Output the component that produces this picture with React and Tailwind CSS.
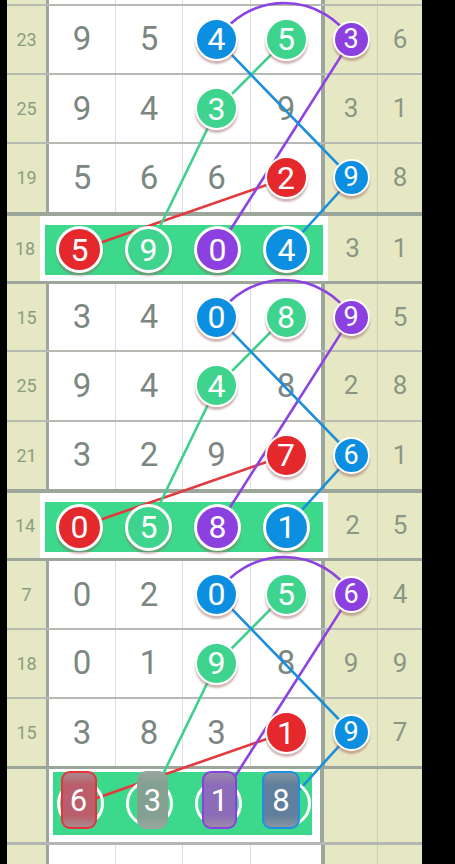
import React from "react";

const BALL_BG = {
  blue: "bg-[#0d8fe1]",
  green: "bg-[#3fd48e]",
  purple: "bg-[#8c40df]",
  red: "bg-[#e5282c]",
};

function Ball({ n, color, size }) {
  const sizeCls =
    size === "sm"
      ? "w-[37px] h-[37px] border-2 text-[27px]"
      : size === "xl"
      ? "w-[47px] h-[47px] border-[3px] text-[32px]"
      : "w-[43px] h-[43px] border-[2.5px] text-[32px]";
  return (
    <div
      className={`relative z-20 flex items-center justify-center rounded-full border-white text-white leading-none shadow-[0_3px_2px_rgba(150,90,90,0.45)] ${sizeCls} ${BALL_BG[color]}`}
    >
      {n}
    </div>
  );
}

function Row({ label, c1, c2, c3, c4, c5, c6, top, h }) {
  const topCls =
    top === "thick"
      ? "border-t-[3px] border-[#9ca69a]"
      : top === "none"
      ? ""
      : top === "bottom"
      ? "border-t-[3px] border-[#b3b6b2]"
      : "border-t-2 border-[#b5bab3]";
  const hCls = h === "top" ? "h-[7px]" : h === "bottom" ? "h-[40px]" : "h-[69.33px]";
  return (
    <div className={`flex ${hCls} ${topCls}`}>
      <div className="w-[42px] bg-[#e5e8c2] border-r-[3px] border-r-[#9ca69a] flex items-center justify-center text-[18px] text-[#8a9d83]">
        {label}
      </div>
      <div className="w-[67px] bg-white border-r border-r-[#dcdfdc] flex items-center justify-center text-[33px] text-[#7c8781]">
        {c1}
      </div>
      <div className="w-[67px] bg-white border-r border-r-[#dcdfdc] flex items-center justify-center text-[33px] text-[#7c8781]">
        {c2}
      </div>
      <div className="w-[68px] bg-white border-r border-r-[#dcdfdc] flex items-center justify-center text-[33px] text-[#7c8781]">
        {c3}
      </div>
      <div className="w-[70px] bg-white flex items-center justify-center text-[33px] text-[#7c8781]">
        {c4}
      </div>
      <div className="w-[57px] bg-[#e5e8c2] border-l-[4px] border-l-[#9ca69a] border-r border-r-[#cdd1b0] flex items-center justify-center text-[26px] text-[#8a9686]">
        {c5}
      </div>
      <div className="w-[44px] bg-[#e5e8c2] flex items-center justify-center text-[26px] text-[#8a9686]">
        {c6}
      </div>
    </div>
  );
}

function GreenRow({ label, balls, c5, c6 }) {
  const colors = ["red", "green", "purple", "blue"];
  return (
    <div className="flex h-[69.33px] border-t-4 border-[#9ca69a]">
      <div className="w-[33px] bg-[#e5e8c2] flex items-center justify-center pl-[3px] text-[18px] text-[#8a9d83]">
        {label}
      </div>
      <div className="w-[288px] bg-white pl-[5px] pr-[5px] pt-[9px] pb-[6px] flex">
        <div className="flex-1 bg-[#3cd98c] flex items-center pl-[11px] gap-[22px]">
          {balls.map((b, i) => (
            <Ball key={i} n={b} color={colors[i]} size="xl" />
          ))}
        </div>
      </div>
      <div className="w-[50px] bg-[#e5e8c2] border-r border-r-[#cdd1b0] flex items-center justify-center text-[26px] text-[#8a9686]">
        {c5}
      </div>
      <div className="w-[44px] bg-[#e5e8c2] flex items-center justify-center text-[26px] text-[#8a9686]">
        {c6}
      </div>
    </div>
  );
}

function GhostSlot({ n, rectCls }) {
  return (
    <div className="relative z-20 w-[47px] h-[47px] rounded-full border-[3px] border-white">
      <div
        className={`absolute -top-[12px] h-[58px] rounded-[9px] flex items-center justify-center text-[31px] text-white leading-none ${rectCls}`}
      >
        {n}
      </div>
    </div>
  );
}

function GhostGreenRow() {
  return (
    <div className="flex h-[76px] border-t-[3px] border-[#9ca69a]">
      <div className="w-[42px] bg-[#e5e8c2] border-r-[3px] border-r-[#9ca69a]" />
      <div className="w-[271px] bg-white pl-[4px] pr-[8px] pt-[3px] pb-[7px] flex">
        <div className="flex-1 bg-[#3cd98c] flex items-center pl-[3.5px] gap-[22px]">
          <GhostSlot
            n="6"
            rectCls="left-[1px] w-[36px] border-2 border-[#e5333b] bg-[linear-gradient(180deg,#a9898f_0%,#bb5d6a_22%,#bb5d6a_78%,#a9898f_100%)]"
          />
          <GhostSlot
            n="3"
            rectCls="left-[8.5px] w-[31px] bg-[linear-gradient(180deg,#9aa69e_0%,#84a091_22%,#84a091_78%,#9aa69e_100%)]"
          />
          <GhostSlot
            n="1"
            rectCls="left-[4.5px] w-[35px] border-2 border-[#8a3fe0] bg-[linear-gradient(180deg,#9a8aa8_0%,#8c6cb8_22%,#8c6cb8_78%,#9a8aa8_100%)]"
          />
          <GhostSlot
            n="8"
            rectCls="-left-[4.5px] w-[38px] border-2 border-[#1e90e4] bg-[linear-gradient(180deg,#8a94a0_0%,#5f7f9c_22%,#5f7f9c_78%,#8a94a0_100%)]"
          />
        </div>
      </div>
      <div className="w-[58px] bg-[#e5e8c2] border-l-[4px] border-l-[#9ca69a] border-r border-r-[#cdd1b0]" />
      <div className="w-[44px] bg-[#e5e8c2]" />
    </div>
  );
}

function Lines() {
  const y0 = 35.67;
  const y1 = 105;
  const y2 = 174.33;
  const yg = 246;
  const c3 = 210;
  const c4 = 279;
  const c5 = 344.5;
  const g = [72.5, 141.5, 210.5, 279.5];
  return (
    <svg
      className="absolute left-0 top-0 z-10 overflow-visible pointer-events-none"
      width="415"
      height="277"
      fill="none"
      strokeWidth="2.6"
      strokeLinecap="round"
    >
      <line x1={g[0]} y1={yg} x2={c4} y2={y2} stroke="#e23b3f" />
      <polyline points={`${g[1]},${yg} ${c3},${y1} ${c4},${y0}`} stroke="#3fd08f" />
      <line x1={g[2]} y1={yg} x2={c5} y2={y0} stroke="#8d43e2" />
      <path d={`M${c3} ${y0} A 80 80 0 0 1 ${c5} ${y0}`} stroke="#8d43e2" />
      <polyline points={`${c3},${y0} ${c5},${y2} ${g[3]},${yg}`} stroke="#1c8fdc" />
    </svg>
  );
}

function Group({ data, first, ghost }) {
  return (
    <div className="relative">
      <Lines />
      <Row
        top={first ? "thin" : "thick"}
        label={data.l[0]}
        c1={data.r0[0]}
        c2={data.r0[1]}
        c3={<Ball n={data.r0[2]} color="blue" />}
        c4={<Ball n={data.r0[3]} color="green" />}
        c5={<Ball n={data.r0[4]} color="purple" size="sm" />}
        c6={data.r0[5]}
      />
      <Row
        label={data.l[1]}
        c1={data.r1[0]}
        c2={data.r1[1]}
        c3={<Ball n={data.r1[2]} color="green" />}
        c4={data.r1[3]}
        c5={data.r1[4]}
        c6={data.r1[5]}
      />
      <Row
        label={data.l[2]}
        c1={data.r2[0]}
        c2={data.r2[1]}
        c3={data.r2[2]}
        c4={<Ball n={data.r2[3]} color="red" />}
        c5={<Ball n={data.r2[4]} color="blue" size="sm" />}
        c6={data.r2[5]}
      />
      {ghost ? (
        <GhostGreenRow />
      ) : (
        <GreenRow label={data.l[3]} balls={data.g} c5={data.g5} c6={data.g6} />
      )}
    </div>
  );
}

const GROUPS = [
  {
    l: ["23", "25", "19", "18"],
    r0: ["9", "5", "4", "5", "3", "6"],
    r1: ["9", "4", "3", "9", "3", "1"],
    r2: ["5", "6", "6", "2", "9", "8"],
    g: ["5", "9", "0", "4"],
    g5: "3",
    g6: "1",
  },
  {
    l: ["15", "25", "21", "14"],
    r0: ["3", "4", "0", "8", "9", "5"],
    r1: ["9", "4", "4", "8", "2", "8"],
    r2: ["3", "2", "9", "7", "6", "1"],
    g: ["0", "5", "8", "1"],
    g5: "2",
    g6: "5",
  },
  {
    l: ["7", "18", "15", ""],
    r0: ["0", "2", "0", "5", "6", "4"],
    r1: ["0", "1", "9", "8", "9", "9"],
    r2: ["3", "8", "3", "1", "9", "7"],
  },
];

export default function App() {
  return (
    <div className="w-[455px] h-[864px] overflow-hidden bg-black flex font-['Roboto','Noto_Sans',sans-serif]">
      <div className="w-[7px] shrink-0" />
      <div className="w-[415px] shrink-0 flex flex-col">
        <Row top="none" h="top" />
        <Group data={GROUPS[0]} first />
        <Group data={GROUPS[1]} />
        <Group data={GROUPS[2]} ghost />
        <Row top="bottom" h="bottom" />
      </div>
      <div className="w-[33px] shrink-0" />
    </div>
  );
}
